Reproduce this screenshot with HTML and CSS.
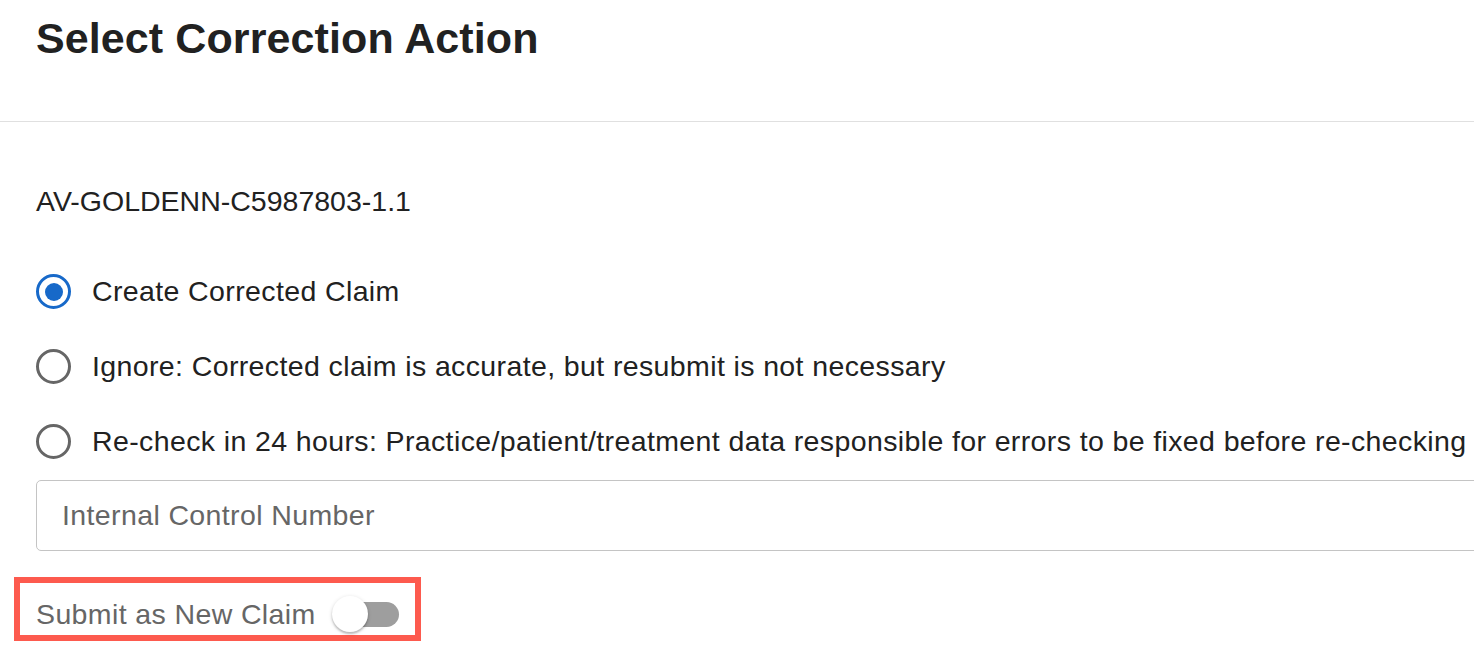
FILE: index.html
```html
<!DOCTYPE html>
<html lang="en">
<head>
<meta charset="utf-8">
<title>Select Correction Action</title>
<link rel="stylesheet" href="styles.css">
</head>
<body>
  <header class="dialog-header">
    <h1 class="dialog-title">Select Correction Action</h1>
  </header>
  <main class="dialog-body">
    <p class="claim-id">AV-GOLDENN-C5987803-1.1</p>
    <div class="radio-group" role="radiogroup">
      <label class="radio-row">
        <span class="radio radio-checked"><span class="radio-dot"></span></span>
        <span class="radio-label">Create Corrected Claim</span>
      </label>
      <label class="radio-row">
        <span class="radio"></span>
        <span class="radio-label">Ignore: Corrected claim is accurate, but resubmit is not necessary</span>
      </label>
      <label class="radio-row">
        <span class="radio"></span>
        <span class="radio-label">Re-check in 24 hours: Practice/patient/treatment data responsible for errors to be fixed before re-checking</span>
      </label>
    </div>
    <div class="text-field">
      <span class="placeholder">Internal Control Number</span>
    </div>
    <div class="highlight-box">
      <span class="switch-label">Submit as New Claim</span>
      <span class="switch">
        <span class="switch-track"></span>
        <span class="switch-thumb"></span>
      </span>
    </div>
  </main>
</body>
</html>
```

FILE: styles.css
```css
html, body {
  margin: 0;
  padding: 0;
  background: #ffffff;
  overflow: hidden;
}

body {
  font-family: "Liberation Sans", Arial, Helvetica, sans-serif;
  color: #212121;
  width: 1474px;
  height: 652px;
}

.dialog-header {
  height: 122px;
  box-sizing: border-box;
  padding: 13px 0 0 36px;
  border-bottom: 1px solid #e0e0e0;
}

.dialog-title {
  margin: 0;
  font-size: 43px;
  line-height: 50px;
  font-weight: 700;
  letter-spacing: 0.1px;
  color: #212121;
}

.dialog-body {
  padding-left: 36px;
}

.claim-id {
  margin: 59px 0 0 0;
  font-size: 28.5px;
  line-height: 40px;
}

.radio-group {
  margin-top: 33px;
  display: flex;
  flex-direction: column;
}

.radio-row {
  height: 75px;
  display: flex;
  align-items: center;
  gap: 21px;
  font-size: 28.5px;
  letter-spacing: 0.38px;
  white-space: nowrap;
}

.radio {
  width: 35px;
  height: 35px;
  box-sizing: border-box;
  border: 3.5px solid #666666;
  border-radius: 50%;
  display: flex;
  align-items: center;
  justify-content: center;
  flex: none;
}

.radio-checked {
  border-color: #1769c9;
}

.radio-dot {
  width: 18px;
  height: 18px;
  border-radius: 50%;
  background: #1769c9;
}

.text-field {
  margin-top: 1px;
  width: 1470px;
  height: 71px;
  box-sizing: border-box;
  border: 1px solid #c4c4c4;
  border-radius: 5px;
  padding-left: 25px;
  display: flex;
  align-items: center;
}

.placeholder {
  font-size: 28.5px;
  letter-spacing: 0.38px;
  color: #666666;
}

.highlight-box {
  margin: 26px 0 0 -22px;
  width: 407px;
  height: 64px;
  box-sizing: border-box;
  border: 6px solid #fd5a4e;
  padding: 13px 16px 3px 16px;
  display: flex;
  align-items: center;
  justify-content: space-between;
}

.switch-label {
  font-size: 28.5px;
  letter-spacing: 0.38px;
  color: #666666;
  white-space: nowrap;
}

.switch {
  position: relative;
  width: 67px;
  height: 36px;
  flex: none;
}

.switch-track {
  position: absolute;
  left: 7px;
  top: 6px;
  width: 60px;
  height: 25px;
  border-radius: 13px;
  background: #9e9e9e;
}

.switch-thumb {
  position: absolute;
  left: 0;
  top: 0;
  width: 36px;
  height: 36px;
  border-radius: 50%;
  background: #ffffff;
  box-shadow: 0 2px 2px rgba(0, 0, 0, 0.2), 0 1px 4px rgba(0, 0, 0, 0.14);
}
```
